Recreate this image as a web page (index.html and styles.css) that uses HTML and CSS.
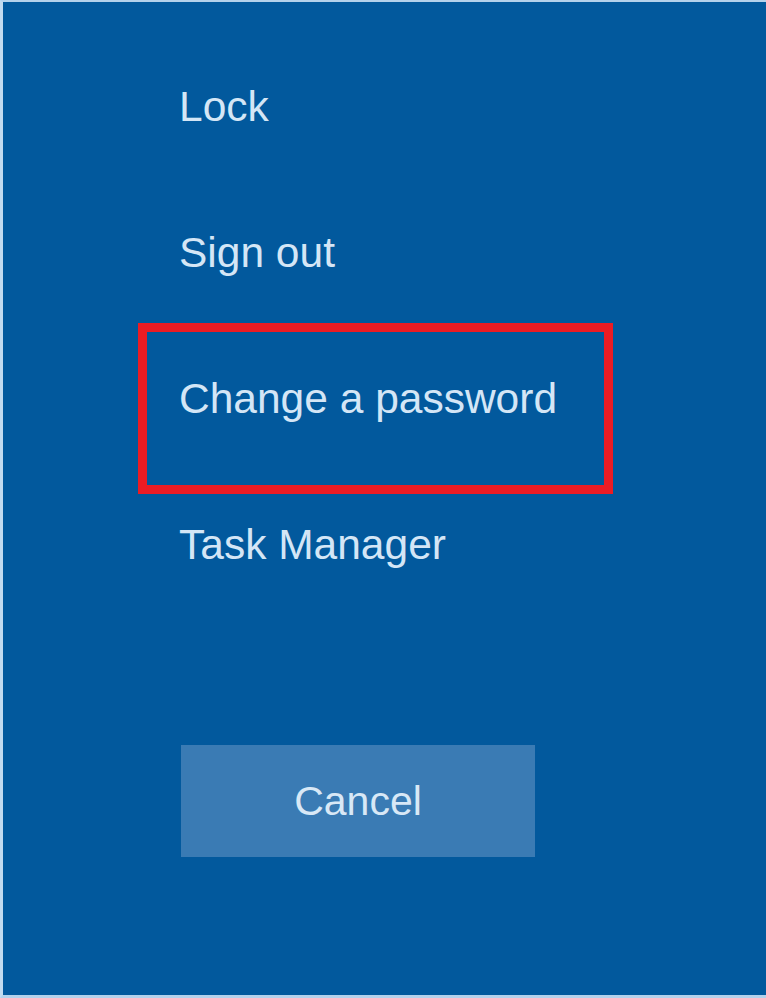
FILE: index.html
```html
<!DOCTYPE html>
<html lang="en">
<head>
<meta charset="utf-8">
<title>Security options</title>
<link rel="stylesheet" href="styles.css">
</head>
<body>
<main class="screen">
  <ul class="options">
    <li class="option">Lock</li>
    <li class="option">Sign out</li>
    <li class="option option--highlight">Change a password</li>
    <li class="option">Task Manager</li>
  </ul>
  <button class="cancel" type="button">Cancel</button>
</main>
</body>
</html>
```
FILE: styles.css
```css
html, body {
  margin: 0;
  padding: 0;
  background: #ffffff;
}

.screen {
  box-sizing: border-box;
  width: 766px;
  height: 998px;
  background: #02599d;
  border-top: 2px solid #b4d2ec;
  border-left: 3px solid #c2dbf0;
  border-bottom: 3px solid #b4d2ec;
  padding: 81px 0 0 176px;
  font-family: "Liberation Sans", Arial, sans-serif;
  color: #d4e6f6;
}

.options {
  list-style: none;
  margin: 0;
  padding: 0;
  display: flex;
  flex-direction: column;
  gap: 98px;
}

.option {
  font-size: 42.5px;
  line-height: 48px;
  height: 48px;
  white-space: nowrap;
}

.option--highlight {
  position: relative;
}

.option--highlight::after {
  content: "";
  position: absolute;
  left: -41px;
  top: -52px;
  width: 457px;
  height: 153px;
  border: 9px solid #ec1c24;
}

.cancel {
  display: block;
  margin-top: 176px;
  margin-left: 2px;
  width: 354px;
  height: 112px;
  border: none;
  background: #3a7bb4;
  color: #d8e8f6;
  font-family: "Liberation Sans", Arial, sans-serif;
  font-size: 41px;
  padding: 0;
}
```
